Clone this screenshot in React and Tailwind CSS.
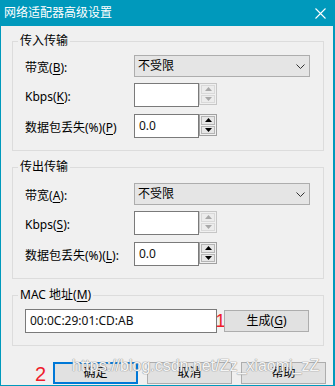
import React from 'react';

const font = { fontFamily: '"Noto Sans", "Noto Sans CJK SC", sans-serif' };

// label with underlined access key, e.g. 带宽(B):
const Label = ({ pre, k, post }) => (
  <span className="text-[12px] leading-[16px] text-black whitespace-nowrap">
    {pre}(<span className="underline underline-offset-2">{k}</span>){post}
  </span>
);

const Chevron = () => (
  <svg width="9" height="5" viewBox="0 0 9 5" className="mr-[4px]">
    <path d="M0.5 0.5 L4.5 4.5 L8.5 0.5" fill="none" stroke="#333" strokeWidth="1" />
  </svg>
);

const Select = ({ value }) => (
  <div className="flex h-[22px] w-[176px] items-center justify-between border border-[#adadad] bg-[#e5e5e5] pl-[3px] text-[12px] text-black">
    <span>{value}</span>
    <Chevron />
  </div>
);

const Arrow = ({ up, color }) => (
  <svg width="7" height="4" viewBox="0 0 7 4">
    {up ? <path d="M0 4 L3.5 0 L7 4 Z" fill={color} /> : <path d="M0 0 L3.5 4 L7 0 Z" fill={color} />}
  </svg>
);

const Spin = ({ disabled }) => {
  const c = disabled ? '#a8a8a8' : '#000';
  const btn = disabled
    ? 'flex flex-1 items-center justify-center border border-[#d9d9d9] bg-[#ececec]'
    : 'flex flex-1 items-center justify-center border border-[#b5b5b5] bg-[#e6e6e6]';
  return (
    <div className={`flex h-[22px] w-[18px] flex-col gap-[1px] border p-[1px] ${disabled ? 'border-[#c6c6c6]' : 'border-[#a0a0a0]'} bg-[#f0f0f0]`}>
      <div className={btn}><Arrow up color={c} /></div>
      <div className={btn}><Arrow color={c} /></div>
    </div>
  );
};

const SpinInput = ({ value, disabled }) => (
  <div className="flex items-start">
    <div className="flex h-[24px] w-[65px] items-center border border-[#7a7a7a] bg-white pl-[4px] text-[12px] text-[#111]">
      {value}
    </div>
    <Spin disabled={disabled} />
  </div>
);

const Row = ({ label, children, className = '' }) => (
  <div className={`flex items-center ${className}`}>
    <div className="w-[109px]">{label}</div>
    {children}
  </div>
);

const Group = ({ title, className = '', children }) => (
  <fieldset className={`ml-[11px] w-[312px] border border-[#dcdcdc] ${className}`}>
    <legend className="ml-[5px] px-[2px] text-[12px] leading-[16px] text-black">{title}</legend>
    {children}
  </fieldset>
);

const Button = ({ children, focused, className = '' }) => (
  <div
    className={`flex h-[22px] w-[85px] items-center justify-center bg-[#e1e1e1] text-[12px] text-black ${
      focused ? 'border-2 border-[#0078d7]' : 'border border-[#adadad]'
    } ${className}`}
  >
    {children}
  </div>
);

const Transfer = ({ title, keys, padTop }) => (
  <Group title={title} className={keys.mt}>
    <div className={`flex flex-col pl-[12px] pb-[12px] ${padTop}`}>
      <Row label={<Label pre="带宽" k={keys.bw} post=":" />}>
        <Select value="不受限" />
      </Row>
      <Row label={<Label pre="Kbps" k={keys.kb} post=":" />} className="mt-[5px]">
        <SpinInput value="" disabled />
      </Row>
      <Row label={<Label pre="数据包丢失(%)" k={keys.loss} post={keys.colon} />} className="mt-[7px]">
        <SpinInput value="0.0" />
      </Row>
    </div>
  </Group>
);

export default function App() {
  return (
    <div className="relative flex h-[386px] w-[335px] flex-col bg-[#0099bc] select-none" style={font}>
      {/* title bar */}
      <div className="flex h-[26px] items-center justify-between pl-[4px] pr-[9px] text-white">
        <span className="text-[12px] leading-[16px]">网络适配器高级设置</span>
        <svg width="11" height="11" viewBox="0 0 11 11">
          <path d="M0.5 0.5 L10.5 10.5 M10.5 0.5 L0.5 10.5" stroke="#fff" strokeWidth="1.1" />
        </svg>
      </div>

      {/* client area */}
      <div className="ml-[1px] mr-[2px] h-[359px] bg-[#f0f0f0]">
        <Transfer
          title="传入传输"
          keys={{ bw: 'B', kb: 'K', loss: 'P', colon: '', mt: 'mt-[7px]' }}
          padTop="pt-[5px]"
        />
        <Transfer
          title="传出传输"
          keys={{ bw: 'A', kb: 'S', loss: 'L', colon: ':', mt: 'mt-[8px]' }}
          padTop="pt-[7px]"
        />

        <Group
          title={<>MAC 地址(<span className="underline underline-offset-2">M</span>)</>}
          className="mt-[8px]"
        >
          <div className="flex items-start pl-[12px] pt-[6px] pb-[12px]">
            <div className="flex h-[24px] w-[192px] items-center border border-[#7a7a7a] bg-white pl-[4px] text-[12px] text-[#111]">
              00:0C:29:01:CD:AB
            </div>
            <span
              className="flex h-[24px] w-[7px] items-center justify-center text-[18px] leading-none text-[#ee1c2c]"
              style={{ fontFamily: '"Liberation Sans", sans-serif' }}
            >
              1
            </span>
            <Button className="mt-[1px]">
              生成(<span className="underline underline-offset-2">G</span>)
            </Button>
          </div>
        </Group>

        {/* dialog buttons */}
        <div className="mt-[16px] flex items-end pl-[34px]">
          <span
            className="w-[18px] text-[20px] leading-[20px] text-[#ee1c2c]"
            style={{ fontFamily: '"Liberation Sans", sans-serif' }}
          >
            2
          </span>
          <div className="flex gap-[9px]">
            <Button focused>确定</Button>
            <Button>取消</Button>
            <Button>帮助</Button>
          </div>
        </div>
      </div>

      {/* csdn watermark */}
      <div
        className="pointer-events-none absolute left-[72px] top-[357px] whitespace-nowrap text-[16px] leading-[18px] text-white/90 [text-shadow:0_0_1px_#9a9a9a,0_0_1px_#9a9a9a,0_0_1px_#9a9a9a]"
        style={{ fontFamily: '"Liberation Sans", sans-serif' }}
      >
        https://blog.csdn.net/Zz_xiaomi_zZ
      </div>
    </div>
  );
}
